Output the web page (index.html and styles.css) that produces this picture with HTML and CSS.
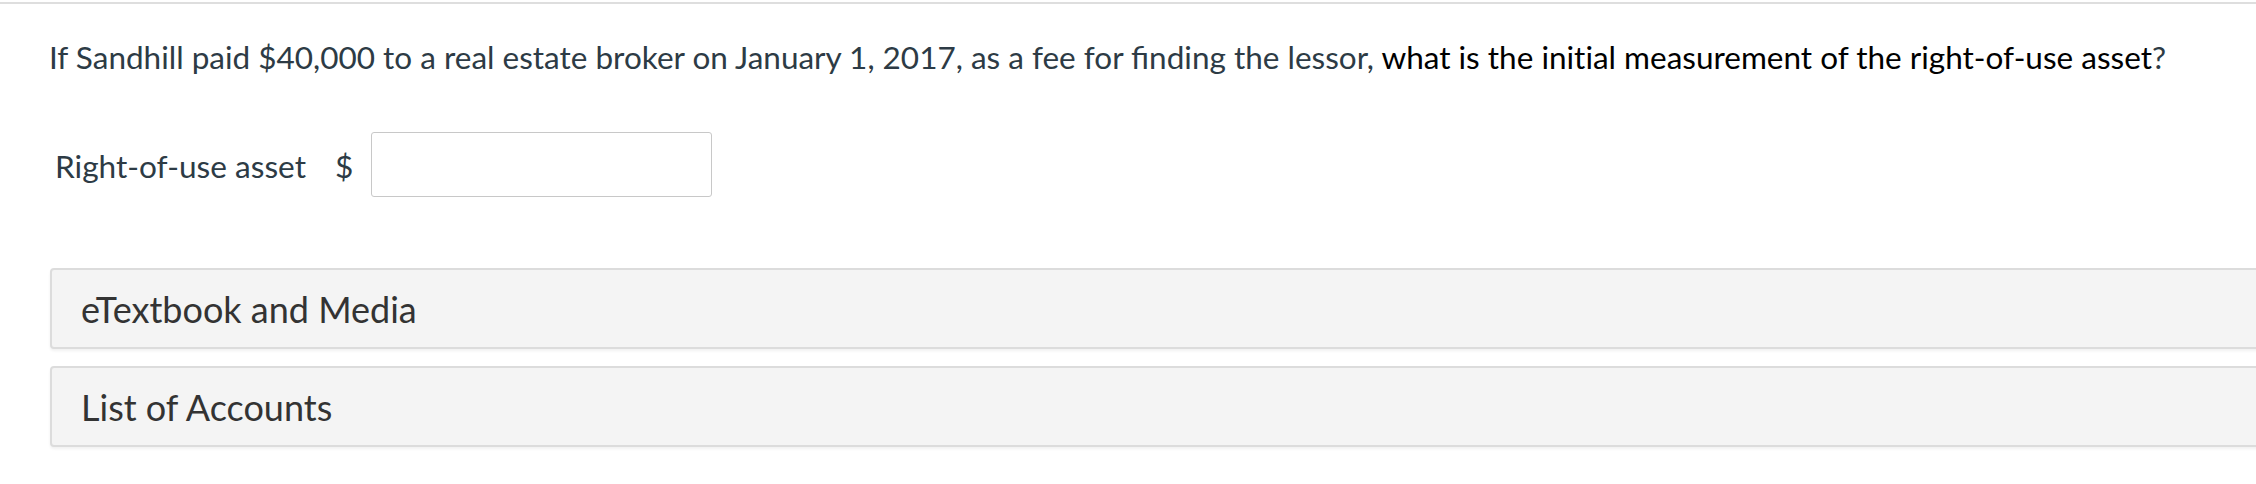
FILE: index.html
```html
<!DOCTYPE html>
<html>
<head>
<meta charset="utf-8">
<link rel="stylesheet" href="styles.css">
</head>
<body>
<div class="page">
  <div class="topline"></div>
  <p class="question">If Sandhill paid $40,000 to a real estate broker on January 1, 2017, as a fee for finding the lessor, <span class="strong">what is the ini<span class="nolig">ti</span>al measurement of the right-of-use asset</span>?</p>
  <div class="answer-row">
    <span class="label">Right-of-use asset</span>
    <span class="dollar">$</span>
    <input class="field" type="text">
  </div>
  <div class="panels">
    <div class="panel">eTextbook and Media</div>
    <div class="panel">List of Accounts</div>
  </div>
</div>
</body>
</html>
```
FILE: styles.css
```css
html, body {
  margin: 0;
  padding: 0;
  background: #fff;
  overflow: hidden;
}
body {
  font-family: Lato, "Open Sans", sans-serif;
}
.page {
  width: 2256px;
  height: 484px;
  overflow: hidden;
}
.topline {
  margin-top: 2px;
  height: 2px;
  background: #dedede;
}
.question {
  margin: 0;
  padding: 34px 0 0 49px;
  font-size: 31.5px;
  line-height: 38px;
  color: #2d3b45;
  white-space: nowrap;
}
.strong {
  color: #000;
}
.nolig {
  font-variant-ligatures: none;
  font-feature-settings: "liga" 0, "clig" 0, "dlig" 0;
}
.answer-row {
  display: flex;
  align-items: center;
  padding: 56px 0 0 55px;
}
.label {
  font-size: 31.6px;
  color: #2d3b45;
  padding-top: 2px;
}
.dollar {
  font-size: 31.6px;
  color: #2d3b45;
  margin-left: 29px;
  padding-top: 2px;
}
.field {
  margin-left: 18px;
  width: 341px;
  height: 65px;
  box-sizing: border-box;
  border: 1.5px solid #c8c8c8;
  border-radius: 3px;
  background: #fff;
  padding: 0;
}
.panels {
  display: flex;
  flex-direction: column;
  gap: 17px;
  padding: 71px 0 0 50px;
}
.panel {
  margin-right: -20px;
  height: 81px;
  box-sizing: border-box;
  background: #f4f4f4;
  border: 2px solid #dcdcdc;
  border-radius: 4px;
  box-shadow: 0 2px 3px rgba(0,0,0,0.06);
  display: flex;
  align-items: center;
  padding-left: 29px;
  font-size: 36px;
  color: #333;
}
```
